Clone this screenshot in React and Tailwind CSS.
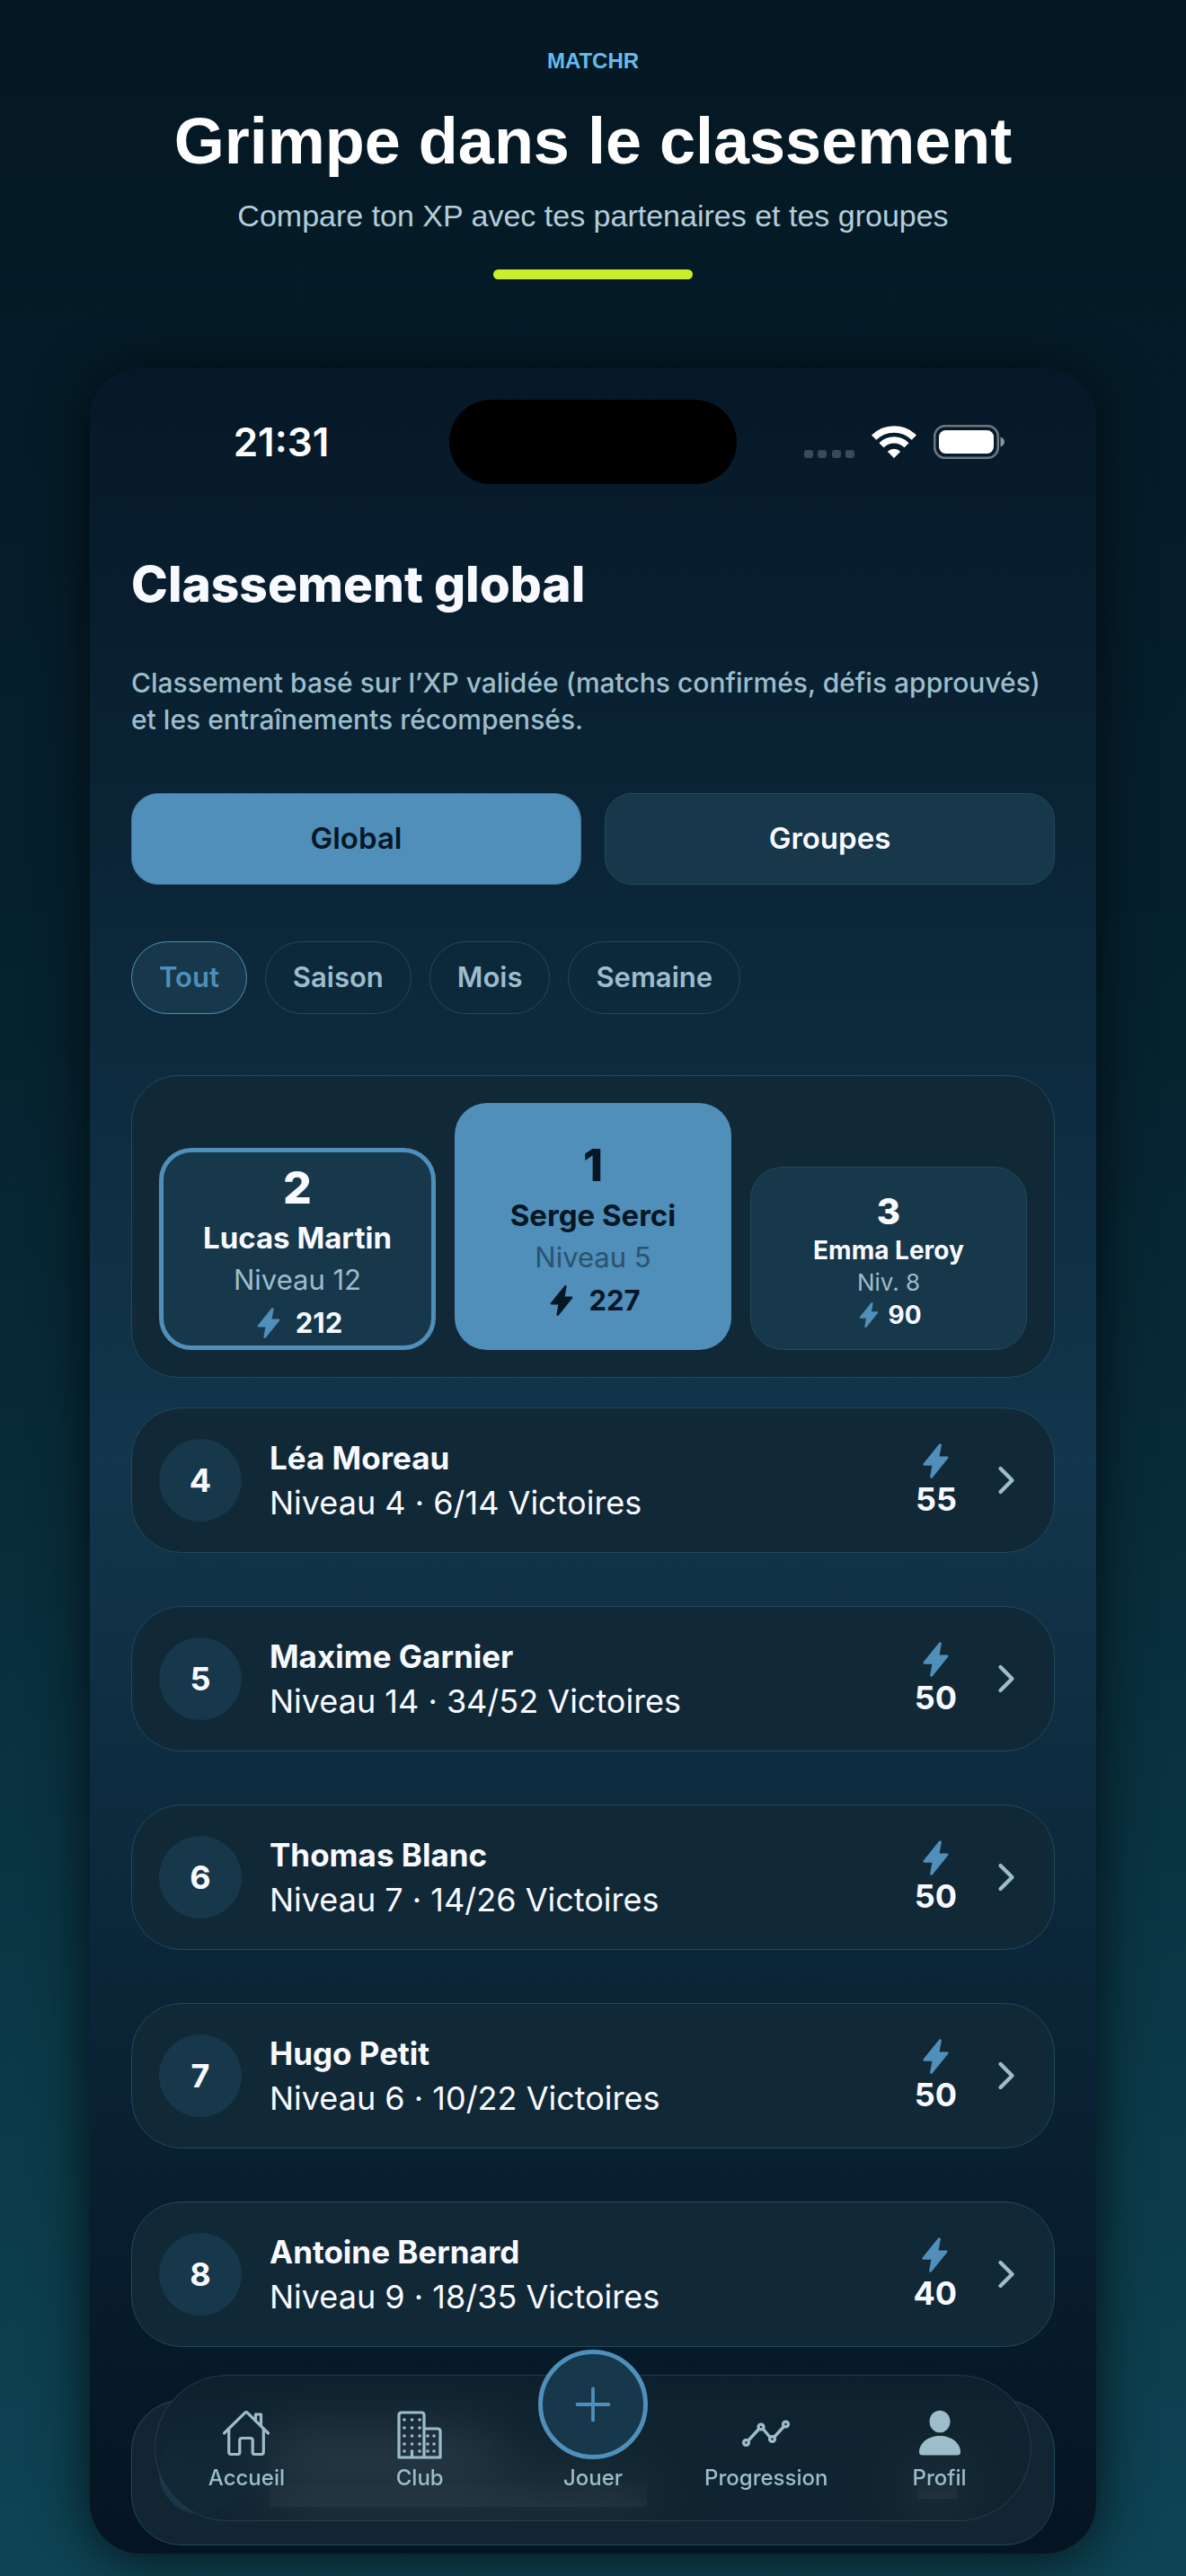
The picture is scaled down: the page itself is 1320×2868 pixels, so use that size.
import { useState } from 'react';
import { IoFlash, IoChevronForward } from 'react-icons/io5';

const podium = [
  { rank: 2, name: 'Lucas Martin', level: 'Niveau 12', xp: 212 },
  { rank: 1, name: 'Serge Serci', level: 'Niveau 5', xp: 227 },
  { rank: 3, name: 'Emma Leroy', level: 'Niv. 8', xp: 90 },
];

const players = [
  { rank: 4, name: 'Léa Moreau', level: 4, wins: '6/14', xp: 55 },
  { rank: 5, name: 'Maxime Garnier', level: 14, wins: '34/52', xp: 50 },
  { rank: 6, name: 'Thomas Blanc', level: 7, wins: '14/26', xp: 50 },
  { rank: 7, name: 'Hugo Petit', level: 6, wins: '10/22', xp: 50 },
  { rank: 8, name: 'Antoine Bernard', level: 9, wins: '18/35', xp: 40 },
];

const periods = ['Tout', 'Saison', 'Mois', 'Semaine'];

// Styles du podium par rang
const podiumBox = {
  1: 'h-[275px] pt-2 gap-[9px] bg-[#4f8fba] text-[#051625]',
  2: 'h-[225px] pt-2 gap-[9px] bg-[#17374a] border-[5px] border-[#4f8fba] text-[#f8faff]',
  3: 'h-[204px] pt-1 gap-[3px] bg-[#17374a] border border-[#214a5c] text-[#f8faff]',
};

function StatusBar() {
  return (
    <div className="grid grid-cols-[1fr_320px_1fr] items-center pt-[35px]">
      <span className="pr-5 text-center text-[44px] leading-[56px] font-semibold text-white">21:31</span>
      <span className="h-[94px] rounded-full bg-black" />
      <div className="flex items-center justify-center gap-[19px] pl-5">
        <svg width="56" height="38" viewBox="0 0 56 38" fill="#3c4a57">
          <rect x="0" y="28" width="10" height="9" rx="3" />
          <rect x="15" y="28" width="10" height="9" rx="3" />
          <rect x="31" y="28" width="10" height="9" rx="3" />
          <rect x="46" y="28" width="10" height="9" rx="3" />
        </svg>
        <svg width="50" height="38" viewBox="0 0 50 38" fill="none" stroke="#fff">
          <path d="M2.6 14.2a31.7 31.7 0 0 1 44.8 0" strokeWidth="7.4" />
          <path d="M11 22.7a19.8 19.8 0 0 1 28 0" strokeWidth="7.2" />
          <path d="M25 37l-7.2-7.3a10.2 10.2 0 0 1 14.4 0z" fill="#fff" stroke="none" />
        </svg>
        <svg width="80" height="38" viewBox="0 0 80 38">
          <rect x="1.2" y="1.2" width="70.6" height="35.6" rx="11.5" fill="none" stroke="#6b7682" strokeWidth="2.6" />
          <rect x="6" y="6" width="61" height="26" rx="7.5" fill="#fff" />
          <path d="M74.5 13.5c3 1 4.5 3 4.5 5.5s-1.5 4.5-4.5 5.5z" fill="#8a939c" />
        </svg>
      </div>
    </div>
  );
}

function PodiumCard({ rank, name, level, xp }) {
  const small = rank === 3;
  return (
    <div className={`flex flex-col items-center justify-center rounded-[36px] ${podiumBox[rank]}`}>
      <span className={small ? 'text-[40px] leading-[46px] font-extrabold' : 'text-[50px] leading-[54px] font-extrabold'}>
        {rank}
      </span>
      <span className={small ? 'text-[28px] leading-[34px] font-bold' : 'text-[33px] leading-[40px] font-bold'}>
        {name}
      </span>
      <span
        className={`${small ? 'text-[26px] leading-[32px]' : 'text-[31px] leading-[36px]'} ${
          rank === 1 ? 'text-[#2a5370]' : 'text-[#9dbdcb]'
        }`}
      >
        {level}
      </span>
      <span className={`flex items-center font-bold ${small ? 'h-[34px] gap-1.5 text-[28px]' : 'h-[42px] gap-3 text-[31px]'}`}>
        <IoFlash size={small ? 30 : 36} className={rank === 1 ? 'text-[#051625]' : 'text-[#4f8fba]'} />
        {xp}
      </span>
    </div>
  );
}

function PlayerRow({ rank, name, level, wins, xp }) {
  return (
    <li>
      <a href="#" className="flex h-[162px] items-center rounded-[56px] border border-[#21495b] bg-[#112837] px-[30px] text-[36px] text-[#f8faff]">
        <span className="flex h-[92px] w-[92px] shrink-0 items-center justify-center rounded-full bg-[#17374a] font-bold">
          {rank}
        </span>
        <span className="ml-[31px] flex-1 leading-[50px]">
          <span className="block text-[35px] font-bold">{name}</span>
          <span className="block">Niveau {level} · {wins} Victoires</span>
        </span>
        <span className="flex flex-col items-center">
          <IoFlash size={41} className="text-[#4f8fba]" />
          <span className="font-bold leading-[44px]">{xp}</span>
        </span>
        <IoChevronForward size={46} className="ml-8 text-[#9dbdcb]" />
      </a>
    </li>
  );
}

// Ligne partiellement masquée par la barre d'onglets
function HiddenRow() {
  return (
    <li aria-hidden="true" className="flex h-[162px] items-center rounded-[56px] border border-[#21495b] bg-[#112533] px-[30px]">
      <span className="h-[92px] w-[92px] rounded-full bg-[#17374a]" />
      <span className="ml-[31px] flex flex-1 flex-col gap-6">
        <span className="h-[26px] w-[250px] bg-white/60" />
        <span className="h-[26px] w-[420px] bg-white/40" />
      </span>
      <span className="mt-8 mr-[78px] h-[26px] w-[44px] bg-white/60" />
    </li>
  );
}

function HomeIcon() {
  return (
    <svg width="56" height="56" viewBox="0 0 56 56" fill="none" stroke="currentColor" strokeWidth="3.2" strokeLinecap="round" strokeLinejoin="round">
      <path d="M3.5 27 26.5 4.4q1.5-1.4 3 0L52.5 27" />
      <path d="M8.7 23v25q0 2.5 2.5 2.5h7.6q2 0 2-2V35q0-2.5 2.5-2.5h9.4q2.5 0 2.5 2.5v13.5q0 2 2 2h7.6q2.5 0 2.5-2.5V23" />
      <path d="M38.5 12V6h6v12" />
    </svg>
  );
}

function ClubIcon() {
  const dots = [];
  for (const y of [12, 21, 30, 39, 47]) {
    for (const x of [11, 19.5, 28]) dots.push([x, y]);
    if (y >= 30) for (const x of [37, 44]) dots.push([x, y]);
  }
  return (
    <svg width="56" height="56" viewBox="0 0 56 56" fill="none" stroke="currentColor" strokeWidth="3.2" strokeLinejoin="round">
      <path d="M5 54V7Q5 4 8 4h22q3 0 3 3v47zM33 22h15q3 0 3 3v29H33" />
      <path d="M19.5 46v7" />
      {dots.map(([x, y]) => (
        <circle key={`${x}-${y}`} cx={x} cy={y} r="1.8" fill="currentColor" stroke="none" />
      ))}
    </svg>
  );
}

function ProgressIcon() {
  return (
    <svg width="56" height="56" viewBox="0 0 56 56" fill="none" stroke="currentColor" strokeWidth="3.4">
      <path d="M8 35 19.5 22.5M24.5 22.5l7.5 9M37 31l10.5-11.5" />
      <circle cx="5.5" cy="37.5" r="2.9" />
      <circle cx="22" cy="20" r="2.9" />
      <circle cx="34.5" cy="33.5" r="2.9" />
      <circle cx="49.5" cy="17" r="2.9" />
    </svg>
  );
}

function ProfileIcon() {
  return (
    <svg width="56" height="56" viewBox="0 0 56 56" fill="currentColor">
      <ellipse cx="28" cy="14" rx="11.5" ry="12.3" />
      <path d="M5 48C5 38 15 30 28 30s23 8 23 18q0 3.5-3.5 3.5h-39Q5 51.5 5 48z" />
    </svg>
  );
}

function PlusIcon() {
  return (
    <span className="flex h-[122px] w-[122px] items-center justify-center rounded-full border-[5px] border-[#4f8fba] bg-[#17374a] text-[#4f8fba]">
      <svg width="40" height="40" viewBox="0 0 40 40" fill="none" stroke="currentColor" strokeWidth="3.8" strokeLinecap="round">
        <path d="M20 2.5v35M2.5 20h35" />
      </svg>
    </span>
  );
}

const tabs = [
  { label: 'Accueil', Icon: HomeIcon },
  { label: 'Club', Icon: ClubIcon },
  { label: 'Jouer', Icon: PlusIcon },
  { label: 'Progression', Icon: ProgressIcon },
  { label: 'Profil', Icon: ProfileIcon },
];

function TabBar() {
  return (
    <nav className="absolute inset-x-[72px] bottom-9 flex h-[163px] items-end rounded-full border border-white/10 bg-[#10242f]/70 px-[5px] pb-[33px] backdrop-blur-[32px]">
      {tabs.map(({ label, Icon }) => (
        <a key={label} href="#" className="flex flex-1 basis-0 flex-col items-center gap-[6px] text-[24px] leading-[29px] font-medium text-[#9dbdcb]">
          <Icon />
          {label}
        </a>
      ))}
    </nav>
  );
}

export default function App() {
  const [scope, setScope] = useState('Global');
  const [period, setPeriod] = useState('Tout');

  return (
    <div className="bg-linear-to-b from-[#041823] via-[#06222f] via-40% to-[#0e4454] pb-[25px] font-['Inter',sans-serif]">
      <header className="flex flex-col items-center pt-[53px] text-center font-['Liberation_Sans',Arial,sans-serif]">
        <p className="text-[24px] leading-[30px] font-bold text-[#63bdee]">MATCHR</p>
        <h1 className="mt-8 text-[72px] leading-[84px] font-bold text-white">Grimpe dans le classement</h1>
        <p className="mt-[21px] text-[34px] leading-[40px] text-[#b4cedb]">Compare ton XP avec tes partenaires et tes groupes</p>
        <span className="mt-10 h-[11px] w-[222px] rounded-full bg-[#c8ee2d]" />
      </header>

      <main className="relative mx-[100px] mt-[99px] rounded-[56px] bg-linear-to-b from-[#061827] via-[#12364c] via-50% to-[#051422] px-[46px] pb-[9px] shadow-[0_6px_60px_rgba(0,0,0,0.7)]">
        <StatusBar />

        <h2 className="mt-[77px] text-[55px] leading-[68px] font-extrabold text-[#f8faff]">Classement global</h2>
        <p className="mt-14 text-[30px] leading-[41px] font-medium text-[#9dbdcb]">
          Classement basé sur l’XP validée (matchs confirmés, défis approuvés) et les entraînements récompensés.
        </p>

        <div className="mt-[61px] flex gap-[26px]">
          {['Global', 'Groupes'].map((s) => (
            <button
              key={s}
              onClick={() => setScope(s)}
              className={`h-[102px] flex-1 rounded-[30px] border text-[33px] font-semibold ${
                scope === s
                  ? 'border-[#3f7898] bg-[#4f8fba] text-[#051625]'
                  : 'border-[#214a5c] bg-[#17374a] text-[#f8faff]'
              }`}
            >
              {s}
            </button>
          ))}
        </div>

        <div className="mt-[63px] flex gap-5">
          {periods.map((p) => (
            <button
              key={p}
              onClick={() => setPeriod(p)}
              className={`h-[81px] rounded-full border px-[30px] text-[31px] font-semibold ${
                period === p
                  ? 'border-[#4f8fba] bg-[#17374a] text-[#4f8fba]'
                  : 'border-[#21495b] text-[#9dbdcb]'
              }`}
            >
              {p}
            </button>
          ))}
        </div>

        <section className="mt-[68px] grid grid-cols-3 items-end gap-[21px] rounded-[52px] border border-[#21495b] bg-[#112837] p-[30px]">
          {podium.map((p) => <PodiumCard key={p.rank} {...p} />)}
        </section>

        <ul className="mt-[33px] flex flex-col gap-[59px]">
          {players.map((p) => <PlayerRow key={p.rank} {...p} />)}
          <HiddenRow />
        </ul>

        <TabBar />
      </main>
    </div>
  );
}
